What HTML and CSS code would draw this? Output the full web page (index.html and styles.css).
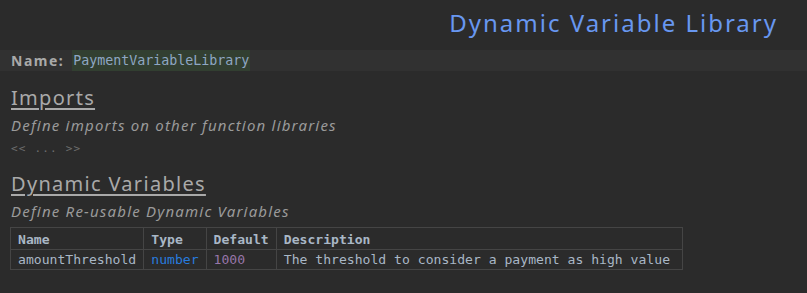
FILE: index.html
```html
<!DOCTYPE html>
<html lang="en">
<head>
	<meta charset="utf-8" />
	<title>Dynamic Variable Library</title>
	<link rel="stylesheet" href="styles.css">
</head>
<body>

<div class="title">Dynamic Variable Library</div>

<div class="name-bar">
	<span class="name-label">Name:</span>
	<span class="name-value">PaymentVariableLibrary</span>
</div>

<div class="content">
	<h2 class="section">Imports</h2>
	<p class="hint">Define imports on other function libraries</p>
	<p class="empty">&lt;&lt; ... &gt;&gt;</p>

	<h2 class="section">Dynamic Variables</h2>
	<p class="hint">Define Re-usable Dynamic Variables</p>

	<table class="vars">
		<tr>
			<th>Name</th>
			<th>Type</th>
			<th>Default</th>
			<th>Description</th>
		</tr>
		<tr>
			<td>amountThreshold</td>
			<td class="type">number</td>
			<td class="num">1000</td>
			<td>The threshold to consider a payment as high value</td>
		</tr>
	</table>
</div>

</body>
</html>
```

FILE: styles.css
```css
body {
	margin: 0;
	background: #2b2b2b;
	font-family: 'Noto Sans', sans-serif;
	color: #a9b7c6;
}
.title {
	height: 50px;
	box-sizing: border-box;
	padding: 8px 29px 0 0;
	text-align: right;
	font-size: 24px;
	line-height: 30px;
	letter-spacing: 2px;
	color: #6897f0;
}
.name-bar {
	display: flex;
	align-items: stretch;
	height: 21px;
	background: #313131;
	padding-left: 11px;
}
.name-label {
	font-size: 14px;
	font-weight: bold;
	color: #a9a9a9;
	line-height: 21px;
	letter-spacing: 1.5px;
	margin-right: 8px;
}
.name-value {
	background: #323f31;
	font-family: 'DejaVu Sans Mono', monospace;
	font-size: 13.3px;
	line-height: 22px;
	color: #8fa7c3;
	padding: 0 1px;
}
.content {
	padding: 0 10px 0 11px;
}
.section {
	margin: 14px 0 0 0;
	font-size: 20px;
	font-weight: normal;
	line-height: 26px;
	letter-spacing: 1.3px;
	text-decoration: underline;
	text-underline-offset: 3px;
	color: #a9a9a9;
}
.hint {
	margin: 3px 0 0 0;
	font-size: 15px;
	font-style: italic;
	line-height: 22px;
	letter-spacing: 1.2px;
	color: #9a9a9a;
}
.empty {
	margin: 5px 0 0 0;
	font-family: 'DejaVu Sans Mono', monospace;
	font-size: 11px;
	line-height: 16px;
	letter-spacing: 1.2px;
	color: #6e6e6e;
}
.vars {
	margin-top: 5px;
	margin-left: -1px;
	border-collapse: collapse;
	font-family: 'DejaVu Sans Mono', monospace;
	font-size: 13.1px;
}
.vars th,
.vars td {
	border: 1px solid #454545;
	padding: 0 7px;
	height: 19px;
	text-align: left;
	white-space: nowrap;
}
.vars th:last-child,
.vars td:last-child {
	padding-right: 12px;
}
.vars th {
	height: 20px;
	padding-top: 1px;
	font-weight: bold;
}
.vars .type {
	color: #287bde;
}
.vars .num {
	color: #9876aa;
}
```
